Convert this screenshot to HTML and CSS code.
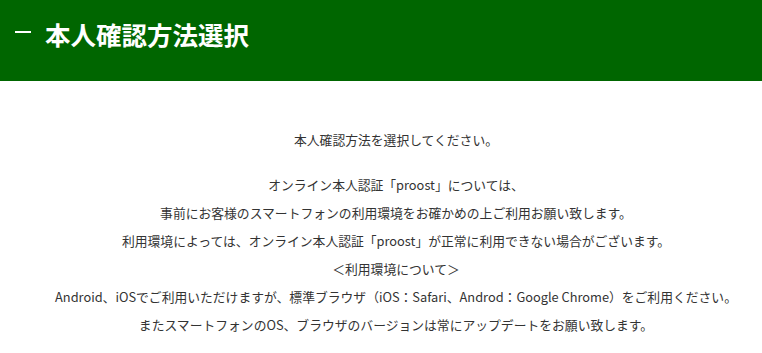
FILE: index.html
```html
<!DOCTYPE html>
<html lang="ja">
<head>
<meta charset="utf-8">
<title>本人確認方法選択</title>
<link rel="stylesheet" href="styles.css">
</head>
<body>
<header class="page-header">
  <h1 class="page-title"><span class="title-bar"></span>本人確認方法選択</h1>
</header>
<main class="content">
  <p class="lead">本人確認方法を選択してください。</p>
  <p class="notes">
    オンライン本人認証「proost」については、<br>
    事前にお客様のスマートフォンの利用環境をお確かめの上ご利用お願い致します。<br>
    利用環境によっては、オンライン本人認証「proost」が正常に利用できない場合がございます。<br>
    ＜利用環境について＞<br>
    Android、iOSでご利用いただけますが、標準ブラウザ（iOS：Safari、Androd：Google Chrome）をご利用ください。<br>
    またスマートフォンのOS、ブラウザのバージョンは常にアップデートをお願い致します。
  </p>
</main>
</body>
</html>
```

FILE: styles.css
```css
html, body {
  margin: 0;
  padding: 0;
  background: #ffffff;
}
body {
  font-family: "Noto Sans CJK JP", "Noto Sans", sans-serif;
  color: #333333;
}
.page-header {
  background: #006600;
  height: 81px;
  box-sizing: border-box;
  padding: 16px 15px 0;
}
.page-title {
  margin: 0;
  display: flex;
  align-items: center;
  font-size: 25.5px;
  line-height: 36px;
  font-weight: 700;
  color: #ffffff;
}
.title-bar {
  display: block;
  width: 16px;
  height: 2px;
  background: #ffffff;
  margin-right: 14px;
  margin-top: -4px;
}
.content {
  padding: 45px 0 0 30px;
  text-align: center;
  font-size: 12.8px;
  line-height: 28px;
}
.lead {
  margin: 0 0 17px;
}
.notes {
  margin: 0;
  white-space: nowrap;
}
```
